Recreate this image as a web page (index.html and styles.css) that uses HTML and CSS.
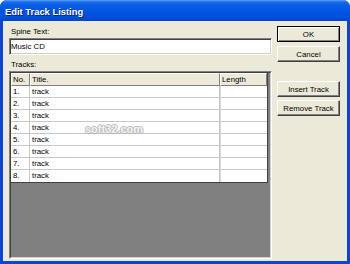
FILE: index.html
```html
<!DOCTYPE html>
<html lang="en">
<head>
    <meta charset="UTF-8">
    <title>Edit Track Listing</title>
    <link rel="stylesheet" href="styles.css">
</head>
<body>

<div class="window">
    <div class="titlebar">Edit Track Listing</div>
    <div class="content">
        <div class="main">
            <div class="label">Spine Text:</div>
            <input type="text" class="field" value="Music CD">
            <div class="label tracks-label">Tracks:</div>
            <div class="list">
                <div class="list-inner">
                    <div class="grid">
                        <div class="row head"><div>No.</div><div>Title.</div><div>Length</div></div>
                        <div class="row"><div>1.</div><div>track</div><div></div></div>
                        <div class="row"><div>2.</div><div>track</div><div></div></div>
                        <div class="row"><div>3.</div><div>track</div><div></div></div>
                        <div class="row"><div>4.</div><div>track</div><div></div></div>
                        <div class="row"><div>5.</div><div>track</div><div></div></div>
                        <div class="row"><div>6.</div><div>track</div><div></div></div>
                        <div class="row"><div>7.</div><div>track</div><div></div></div>
                        <div class="row last"><div>8.</div><div>track</div><div></div></div>
                    </div>
                    <span class="watermark">soft32.com</span>
                </div>
            </div>
        </div>
        <div class="side">
            <button class="btn default">OK</button>
            <button class="btn cancel">Cancel</button>
            <button class="btn insert">Insert Track</button>
            <button class="btn remove">Remove Track</button>
        </div>
    </div>
</div>

</body>
</html>
```

FILE: styles.css
```css
html, body {
    margin: 0;
    background: #ffffff;
}
body {
    font-family: "Liberation Sans", Arial, sans-serif;
    font-size: 7.8px;
    color: #000;
}
.window {
    width: 350px;
    height: 264px;
    background: #0a44d8;
    border-radius: 7px 7px 0 0;
    display: flex;
    flex-direction: column;
    overflow: hidden;
}
.titlebar {
    height: 21px;
    box-sizing: border-box;
    padding: 5px 0 0 5px;
    line-height: 14px;
    font-size: 9.4px;
    font-weight: bold;
    color: #fff;
    text-shadow: 1px 1px #0a1e8a;
    background: linear-gradient(to bottom, #5aa2fa 0px, #1a6cec 2px, #0a5ce6 5px, #0156e2 50%, #0050dc 80%, #0046ca 100%);
}
.content {
    flex: 1;
    margin: 0 3px 3px 3px;
    background: #ece9d8;
    display: flex;
    gap: 5px;
    padding: 5px 7px 2px 6px;
    min-height: 0;
}
.main {
    flex: 1;
    display: flex;
    flex-direction: column;
}
.label {
    margin-top: 1px;
    line-height: 10px;
    padding-left: 2px;
}
.tracks-label {
    margin-top: 5px;
}
.field {
    margin: 1px 0 0 0;
    height: 17px;
    box-sizing: border-box;
    width: 100%;
    padding: 0 0 0 1px;
    font: inherit;
    color: #000;
    background: #fff;
    border: 1px solid;
    border-color: #808080 #fff #fff #808080;
    box-shadow: inset 1px 1px #404040, inset -1px -1px #d4d0c8;
    outline: none;
}
.list {
    flex: 1;
    margin-top: 1px;
    display: flex;
    border: 1px solid;
    border-color: #808080 #fff #fff #808080;
}
.list-inner {
    flex: 1;
    position: relative;
    background: #808080;
    border: 1px solid;
    border-color: #404040 #d4d0c8 #d4d0c8 #404040;
}
.grid {
    width: 257px;
    box-sizing: border-box;
    border-right: 1px solid #404040;
    border-bottom: 1px solid #404040;
}
.row {
    display: grid;
    grid-template-columns: 19px 190px 47px;
    height: 12px;
    background: #fff;
}
.row > div {
    box-sizing: border-box;
    border-right: 1px solid #c8c8c8;
    border-bottom: 1px solid #c8c8c8;
    padding-left: 2px;
    line-height: 11px;
    white-space: nowrap;
    overflow: hidden;
}
.row > div:last-child {
    border-right: none;
    border-left: 1px solid #d8d8d8;
}
.row.last > div {
    border-bottom: none;
}
.row.head {
    height: 13px;
    background: #ece9d8;
}
.row.head > div {
    border-top: 1px solid #fff;
    border-left: 1px solid #fff;
    border-right: 1px solid #808080;
    border-bottom: 1px solid #808080;
    padding-left: 1px;
    line-height: 11px;
}
.row.head > div:last-child {
    border-right: 1px solid #808080;
}
.watermark {
    position: absolute;
    left: 74px;
    top: 51px;
    font-size: 11px;
    line-height: 11px;
    font-weight: bold;
    color: #f2f2f2;
    text-shadow: 1px 0 #b0b0b0, -1px 0 #b0b0b0, 0 1px #b0b0b0, 0 -1px #b0b0b0;
    opacity: 0.85;
}
.side {
    width: 63px;
    display: flex;
    flex-direction: column;
}
.btn {
    height: 16px;
    width: 63px;
    box-sizing: border-box;
    padding: 0;
    margin: 0;
    font: inherit;
    color: #000;
    background: #ece9d8;
    border: 1px solid;
    border-color: #fff #404040 #404040 #fff;
    box-shadow: inset -1px -1px #808080;
}
.btn.default {
    border-color: #000;
    box-shadow: inset 1px 1px #fff, inset -1px -1px #808080;
}
.btn.cancel {
    margin-top: 4px;
}
.btn.insert {
    margin-top: 19px;
}
.btn.remove {
    margin-top: 3px;
}
```
